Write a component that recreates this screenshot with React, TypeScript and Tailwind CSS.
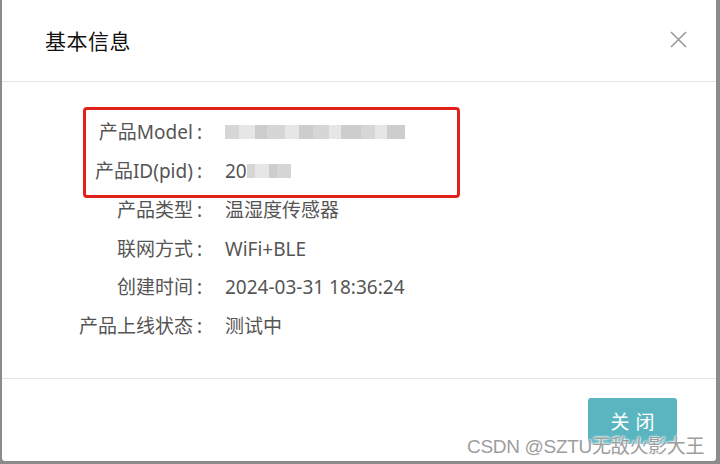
const rows = [
  { label: '产品Model', value: '' },
  { label: '产品ID(pid)', value: '20' },
  { label: '产品类型', value: '温湿度传感器' },
  { label: '联网方式', value: 'WiFi+BLE' },
  { label: '创建时间', value: '2024-03-31 18:36:24' },
  { label: '产品上线状态', value: '测试中' },
]

function Blur({ widths }: { widths: number[] }) {
  // mosaic over the hidden value
  return (
    <span className="inline-flex items-center h-[20px] align-middle">
      {widths.map((w, i) => (
        <span
          key={i}
          className={i % 3 === 0 ? 'h-[14px] bg-[#d6d6d6]' : i % 3 === 1 ? 'h-[14px] bg-[#e6e6e6]' : 'h-[14px] bg-[#cdcdcd]'}
          style={{ width: w }}
        />
      ))}
    </span>
  )
}

export default function App() {
  return (
    <div className="w-[720px] h-[464px] bg-[#8b8b8b] overflow-hidden relative font-['Noto_Sans','Noto_Sans_CJK_SC',sans-serif]">
      <div className="ml-[2px] w-[714px] h-[461px] bg-white rounded-b-[3px] flex flex-col">
        <div className="h-[82px] shrink-0 border-b border-[#e5e5e5] flex items-center justify-between pl-[43px] pr-[29px]">
          <h1 className="text-[21px] text-[#111] font-['Noto_Sans_CJK_SC',sans-serif] tracking-[0.5px]">基本信息</h1>
          <svg width="17" height="17" viewBox="0 0 17 17" className="mt-[-3px]">
            <path d="M1 1L16 16M16 1L1 16" stroke="#9a9a9a" strokeWidth="1.6" />
          </svg>
        </div>

        <div className="h-[297px] shrink-0 border-b border-[#e5e5e5] pt-[31px] relative">
          <div className="grid grid-cols-[200px_1fr] auto-rows-[38.8px] text-[19px] text-[#555] font-['Noto_Sans','Noto_Sans_CJK_SC',sans-serif]">
            {rows.map((r, i) => (
              <div key={r.label} className="contents">
                <div className="flex items-center justify-end">
                  {r.label}
                  <span className="ml-[4px]">:</span>
                </div>
                <div className="pl-[23px] flex items-center">
                  {i === 0 ? (
                    <Blur widths={[14, 16, 12, 18, 14, 14, 16, 12, 20, 14, 12, 18]} />
                  ) : i === 1 ? (
                    <>
                      <span>{r.value}</span>
                      <Blur widths={[8, 14, 8, 14]} />
                    </>
                  ) : (
                    r.value
                  )}
                </div>
              </div>
            ))}
          </div>
          <div className="absolute left-[81px] top-[25px] w-[377px] h-[91px] border-[3px] border-[#e3211c] rounded-[4px]" />
        </div>

        <div className="flex-1 flex justify-end items-start pt-[19px] pr-[39px]">
          <button className="w-[89px] h-[46px] bg-[#5bb5c1] rounded-[3px] text-white text-[19px] font-['Noto_Sans_CJK_SC',sans-serif] tracking-[6px] pl-[6px]">
            关闭
          </button>
        </div>
      </div>

      <div className="absolute left-[467px] top-[433px] text-[19px] text-[#9d9d9d] font-['Liberation_Sans','Noto_Sans_CJK_SC',sans-serif] [text-shadow:0_0_2px_#fff,0_0_2px_#fff,0_0_3px_#fff] tracking-[-0.3px]">
        CSDN @SZTU无敌火影大王
      </div>
    </div>
  )
}
